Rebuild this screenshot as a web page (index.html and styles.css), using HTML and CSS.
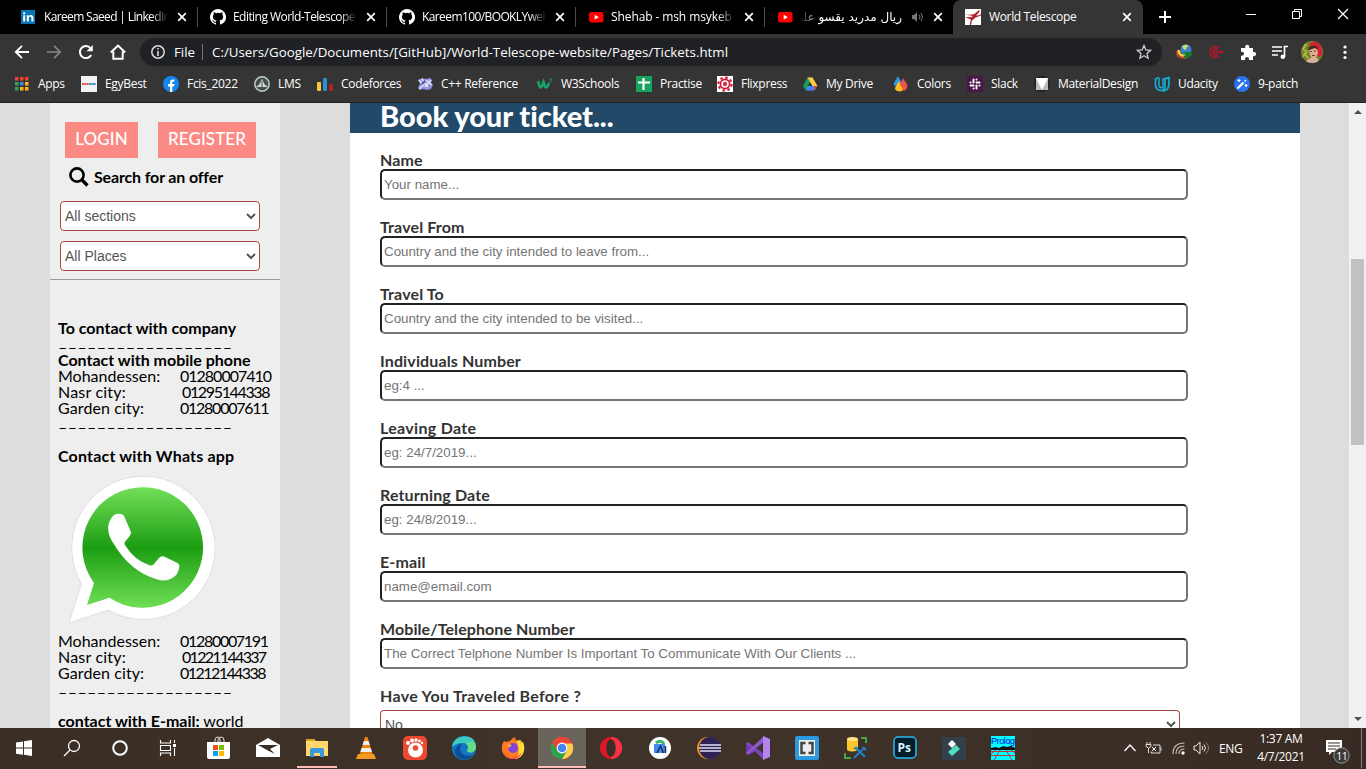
FILE: index.html
```html
<!DOCTYPE html>
<html lang="en">
<head>
<meta charset="utf-8">
<title>World Telescope</title>
<link rel="stylesheet" href="styles.css">
</head>
<body>
<svg class="defs" width="0" height="0">
  <symbol id="x" viewBox="0 0 10 10"><path d="M1.2 1.2l7.6 7.6M8.8 1.2L1.2 8.8" stroke="#fff" stroke-width="1.7"/></symbol>
  <symbol id="github" viewBox="0 0 16 16"><path fill="#fff" d="M8 0a8 8 0 0 0-2.53 15.59c.4.07.55-.17.55-.38v-1.49c-2.23.48-2.69-.94-2.69-.94-.36-.92-.89-1.17-.89-1.17-.73-.5.05-.49.05-.49.8.06 1.23.83 1.23.83.72 1.22 1.88.87 2.34.66.07-.52.28-.87.51-1.07-1.78-.2-3.64-.89-3.64-3.95 0-.87.31-1.59.82-2.15-.08-.2-.36-1.02.08-2.12 0 0 .67-.21 2.2.82a7.6 7.6 0 0 1 4 0c1.53-1.04 2.2-.82 2.2-.82.44 1.1.16 1.92.08 2.12.51.56.82 1.27.82 2.15 0 3.07-1.87 3.75-3.65 3.95.29.25.54.73.54 1.48v2.2c0 .21.15.46.55.38A8 8 0 0 0 8 0z"/></symbol>
  <symbol id="youtube" viewBox="0 0 16 16"><rect x="1" y="3" width="14.5" height="10.5" rx="2.5" fill="#f00"/><path d="M6.7 5.8l4.2 2.4-4.2 2.4z" fill="#fff"/></symbol>
</svg>

<header class="browser">
  <div class="tabs">
    <div class="tab">
      <svg class="fav" viewBox="0 0 16 16"><rect x="0" y="1" width="14" height="14" fill="#0a75b5"/><path d="M2.2 6.2h2v6.3h-2zM2.2 3.2h2v2h-2zM5.8 6.2h2v1c1.3-1.9 4.6-1.4 4.6 1.4v3.9h-2V9c0-1.800-2.600-1.600-2.600 0v3.500h-2z" fill="#fff"/></svg>
      <span class="tab-title fade t-linkedin">Kareem Saeed | LinkedIn</span><svg class="close"><use href="#x"/></svg>
    </div>
    <div class="tab"><svg class="fav"><use href="#github"/></svg><span class="tab-title fade t-edit">Editing World-Telescope</span><svg class="close"><use href="#x"/></svg></div>
    <div class="tab"><svg class="fav"><use href="#github"/></svg><span class="tab-title fade t-book">Kareem100/BOOKLYwel</span><svg class="close"><use href="#x"/></svg></div>
    <div class="tab"><svg class="fav"><use href="#youtube"/></svg><span class="tab-title fade t-shehab">Shehab - msh msykeb |</span><svg class="close"><use href="#x"/></svg></div>
    <div class="tab plain"><svg class="fav"><use href="#youtube"/></svg><span class="tab-title arabic" dir="rtl">ريال مدريد يقسو على</span>
      <svg class="sound" viewBox="0 0 12 12"><path d="M1 4h2l3-3v10L3 8H1z" fill="#777"/><path d="M8 3.500q2 2.500 0 5M10 2q3 4 0 8" fill="none" stroke="#777"/></svg>
      <svg class="close"><use href="#x"/></svg></div>
    <div class="tab active">
      <svg class="fav" viewBox="0 0 16 16"><rect width="16" height="16" fill="#fff"/><path d="M0 5.500l5 .3 4-.5L13.500 1.500 15 1l-1.500 3L11 6.500l3-.3 2-1v1.300l-5.500 2L7 11.500 6 16H4.800l1-5.500L1 8.500 0 8l6 .2L8 7z" fill="#ae1c2c"/></svg>
      <span class="tab-title t-world">World Telescope</span><svg class="close"><use href="#x"/></svg>
    </div>
    <svg class="newtab" viewBox="0 0 14 14"><path d="M7 1v12M1 7h12" stroke="#fff" stroke-width="2"/></svg>
    <div class="winbtns">
      <svg viewBox="0 0 12 12"><path d="M1 6.500h10" stroke="#fff"/></svg>
      <svg viewBox="0 0 12 12"><path d="M1.500 3.500h7v7h-7zM3.500 3.500v-2h7v7h-2" fill="none" stroke="#fff"/></svg>
      <svg viewBox="0 0 12 12"><path d="M1 1l10 10M11 1L1 11" stroke="#fff" stroke-width="1.200"/></svg>
    </div>
  </div>

  <div class="toolbar">
    <nav class="navbtns">
      <svg viewBox="0 0 16 16"><path d="M15 8H2M8 1.800L1.800 8 8 14.200" fill="none" stroke="#fff" stroke-width="1.900"/></svg>
      <svg viewBox="0 0 16 16"><path d="M1 8h13M8 1.800L14.200 8 8 14.200" fill="none" stroke="#858585" stroke-width="1.700"/></svg>
      <svg viewBox="0 0 16 16"><path d="M13.200 11A6 6 0 1 1 12.500 4.200" fill="none" stroke="#fff" stroke-width="2"/><path d="M14.800 1v6.300H8.500z" fill="#fff"/></svg>
      <svg viewBox="0 0 16 16"><path d="M.8 8.500L8 1.600l7.200 6.900M3.300 7.500v7.300h9.400V7.500" fill="none" stroke="#fff" stroke-width="2"/></svg>
    </nav>
    <div class="omnibox">
      <svg class="info" viewBox="0 0 14 14"><circle cx="7" cy="7" r="6.200" fill="none" stroke="#ddd" stroke-width="1.500"/><path d="M7 3v1.600M7 6v5" stroke="#ddd" stroke-width="1.600"/></svg>
      <span class="scheme">File</span><span class="url">C:/Users/Google/Documents/[GitHub]/World-Telescope-website/Pages/Tickets.html</span>
      <svg class="star" viewBox="0 0 16 16"><path d="M8 1.500l1.900 4.400 4.700.4-3.600 3.200 1.100 4.700L8 11.700l-4.100 2.500L5 9.500 1.400 6.300l4.700-.4z" fill="none" stroke="#ccc" stroke-width="1.300"/></svg>
    </div>
    <div class="exts">
      <svg viewBox="0 0 20 20"><circle cx="12" cy="8" r="5.500" fill="#3f7fc9"/><path d="M8 4q4-3 7 0-3 1-3 4-3 0-4-4z" fill="#b7dd75"/><path d="M4 8q-4 8 8 8" fill="none" stroke="#e6452f" stroke-width="1.500"/><path d="M5 8q-1 6 7 6" fill="none" stroke="#f4d43b" stroke-width="2.500"/><path d="M9 10h8l2 2-6 5-4-3 3-1z" fill="#137a27"/></svg>
      <svg viewBox="0 0 20 20"><path d="M13 5.500A5.600 5.600 0 1 0 13 14.500M12 8A3 3 0 1 0 12 12M8 10h7" fill="none" stroke="#cd1127" stroke-width="1.400"/><circle cx="16" cy="10" r="1.200" fill="none" stroke="#cd1127"/></svg>
      <svg viewBox="0 0 20 20"><path d="M3 6h4.200V4.800a2 2 0 0 1 4 0V6H15v4h1a2 2 0 0 1 0 4.200h-1V18h-4v-1a2 2 0 0 0-4 0v1H3v-4.200h1a2 2 0 0 0 0-4H3z" fill="#fff"/></svg>
      <svg viewBox="0 0 20 20"><path d="M2 5h10M2 9h10M2 13h6M14.500 15V4.500H18" fill="none" stroke="#fff" stroke-width="1.700"/><circle cx="12.800" cy="14.800" r="2.300" fill="#fff"/></svg>
      <svg class="avatar" viewBox="0 0 22 22"><clipPath id="av"><circle cx="11" cy="11" r="11"/></clipPath><g clip-path="url(#av)"><path fill="#71852e" d="M0 0h22v22H0z"/><path d="M2 2l3 2-3 4 4 3-5 5M3 12l4 5" fill="none" stroke="#b4bf4b" stroke-width="1.500"/><path d="M8 3q6-6 12 2 3 7-1 11l-3-1z" fill="#d42137"/><path d="M5 22q0-4 5-5h6l4 6z" fill="#d9b0a0"/><path d="M8 7l8-1 1 6q-2 7-5 6-4-2-4-11z" fill="#e0aa8d"/><path d="M7 8q1-4 9-3l1 4-3-2-6 2z" fill="#4a2620"/><path d="M9 10.500h2M13 10h2M11 14.500h3" stroke="#69443a"/></g></svg>
      <svg viewBox="0 0 20 20"><g fill="#fff"><circle cx="11" cy="5" r="1.600"/><circle cx="11" cy="10.300" r="1.600"/><circle cx="11" cy="15.500" r="1.600"/></g></svg>
    </div>
  </div>

  <nav class="bookmarks">
    <a><svg viewBox="0 0 16 16"><path d="M2 1h3.500v3.500H2zM7 1h3.500v3.500H7zM12 1h3.500v3.500H12z" fill="#f04133"/><path d="M2 6h3.500v3.500H2zM2 11h3.500v3.500H2z" fill="#2fa653"/><path d="M7 6h3.500v3.500H7z" fill="#4285f4"/><path d="M7 11h3.500v3.500H7zM12 6h3.500v3.500H12zM12 11h3.500v3.500H12z" fill="#fdb813"/></svg>Apps</a>
    <a><svg viewBox="0 0 16 16"><path fill="#f0f2f5" d="M0 0h16v16H0z"/><path d="M1 8h7" stroke="#df5b49" stroke-width="2.200" stroke-dasharray="2 .3"/><path d="M8 8h7" stroke="#3f8fcf" stroke-width="2.200" stroke-dasharray="2 .3"/></svg>EgyBest</a>
    <a><svg viewBox="0 0 16 16"><circle cx="8" cy="8" r="8" fill="#1685ef"/><path d="M7 16v-5.500H5V8h2V6.400Q7 3.500 10 3.500h1.500v2H10.300Q9.300 5.500 9.300 6.600V8h2.200l-.4 2.500H9.300V16z" fill="#fff"/></svg>Fcis_2022</a>
    <a><svg viewBox="0 0 16 16"><circle cx="8" cy="8" r="7.200" fill="#44504d" stroke="#c6cecb" stroke-width="1.500"/><path d="M8 3l3 6 2 1v1H3v-1l2-1z" fill="#d4d9d4"/><path d="M8 5v7" stroke="#47524e"/></svg>LMS</a>
    <a><svg viewBox="0 0 16 16"><rect y="6" width="4" height="9" rx="1" fill="#f7c641"/><rect x="6" y="2" width="4" height="13" rx="1" fill="#2a92cf"/><rect x="12" y="8" width="4" height="7" rx="1" fill="#b41e25"/></svg>Codeforces</a>
    <a><svg viewBox="0 0 16 16"><path d="M1 4l4-2 4 1 4-1 2 2-1 3 2 2-2 4-4 1-4-1-3 1-2-3 2-3z" fill="#8f91d9"/><path d="M2 4l5 5-5 4M5 3l6 8M9 4l6 5M8 11l6-7" stroke="#e8e8ff" stroke-width="1.300" fill="none"/><path d="M5 8l3-3" stroke="#50509a" stroke-width="2"/></svg>C++ Reference</a>
    <a><svg viewBox="0 0 16 16"><path d="M1 5l1.500 5.500q1.500 2 2.500-.5L6.500 6 8 10.500q1.500 2 2.500 0L12 7" fill="none" stroke="#16a46b" stroke-width="2.600"/><path d="M12.500 3h2l-1 1.500q2 1.500-1 2" fill="none" stroke="#16a46b" stroke-width=".9"/></svg>W3Schools</a>
    <a><svg viewBox="0 0 16 16"><path fill="#16a35d" d="M0 0h16v16H0z"/><path d="M7.500 2v12M2 6.500h12" stroke="#fff" stroke-width="2.200"/></svg>Practise</a>
    <a><svg viewBox="0 0 16 16"><path fill="#fff" d="M0 0h16v16H0z"/><circle cx="8" cy="8" r="4.600" fill="none" stroke="#ce1531" stroke-width="1.700"/><circle cx="8" cy="8" r="6.600" fill="none" stroke="#ce1531" stroke-width="2" stroke-dasharray="2.600 2.580"/><circle cx="8" cy="8" r="2.200" fill="#df3147"/></svg>Flixpress</a>
    <a><svg viewBox="0 0 16 16"><path d="M5.500 1.500h5L8 6 3.500 14 1 10z" fill="#17a05d"/><path d="M5.500 1.500h5l5 8.500h-5z" fill="#ffce42"/><path d="M5.500 10H15l-2.500 4.500h-9z" fill="#4387f4"/><path d="M12 10h3.200l-2.500 4.500z" fill="#df4537"/></svg>My Drive</a>
    <a><svg viewBox="0 0 16 16"><path d="M5 0c1 3 5 6 3 9s-8 2-7-2z" fill="#2d97e3"/><path d="M6 5c1 3 4 5 3 8s-7 3-7-1z" fill="#ffbf22"/><path d="M10 2c1 3 6 6 4 10s-6 3-7 0 2-7 3-10z" fill="#ef5546"/><path d="M5 14q-1-4 2-5l3 4q-1 3-4 2.500z" fill="#ffbf22"/></svg>Colors</a>
    <a><svg viewBox="0 0 16 16"><path fill="#4a154b" d="M0 0h16v16H0z"/><path d="M6.500 3.500v3M9.500 9.500v3M3.500 9.500h3M9.500 6.500h3M9.500 3.500v.1M6.500 12.400v.1M3.500 6.500h.1M12.500 9.500h.1" stroke="#fff" stroke-width="2" stroke-linecap="round"/></svg>Slack</a>
    <a><svg viewBox="0 0 16 16"><circle cx="8" cy="8" r="8" fill="#222"/><path fill="#bbb" d="M2 2h12v12H2z"/><path d="M2 2h12L8 14z" fill="#fff"/></svg>MaterialDesign</a>
    <a><svg viewBox="0 0 16 16"><path d="M5 1.500L1.500 3v7q1 4 5 4.500 4.500 0 4.500-5V3L15 1.500V9q-1 6-7 6" fill="none" stroke="#13acd4" stroke-width="1.700"/><path d="M5 1.500V10q2 3 4 1V3l3-1" fill="none" stroke="#13acd4" stroke-width="1.500"/></svg>Udacity</a>
    <a><svg viewBox="0 0 16 16"><circle cx="8" cy="8" r="8" fill="#2874ee"/><path d="M3.500 12.500l6-6" stroke="#fff" stroke-width="2.200"/><path d="M10.500 5.500l1.500-1.500M5 3v3M3.500 4.500h3M12 8v3M10.500 9.500h3" stroke="#fff" stroke-width="1.200"/></svg>9-patch</a>
  </nav>
</header>

<div class="page">
  <aside class="sidebar">
    <div class="auth"><a class="btn login">LOGIN</a><a class="btn register">REGISTER</a></div>
    <div class="search"><svg viewBox="0 0 20 20"><circle cx="8" cy="8" r="6.600" fill="none" stroke="#000" stroke-width="2.600"/><path d="M12.500 12.500l6 6" stroke="#000" stroke-width="3.200"/></svg><b>Search for an offer</b></div>
    <select class="pick"><option>All sections</option></select>
    <select class="pick"><option>All Places</option></select>
    <hr class="rule">
    <div class="contact">
      <b class="h-company">To contact with company</b>
      <span class="dashes">__________________</span>
      <b class="h-mobile">Contact with mobile phone</b>
      <div class="row"><span class="moh">Mohandessen:</span><span class="num n1">01280007410</span></div>
      <div class="row"><span class="nasr">Nasr city:</span><span class="num in n2">01295144338</span></div>
      <div class="row"><span class="gard">Garden city:</span><span class="num n3">01280007611</span></div>
      <span class="dashes">__________________</span>
      <b class="h-whats">Contact with Whats app</b>
      <svg class="whatsapp" viewBox="0 0 147 150">
        <defs><linearGradient id="wg" x1="0" y1="0" x2="0" y2="1"><stop offset="0" stop-color="#73df59"/><stop offset=".5" stop-color="#1c9e12"/><stop offset="1" stop-color="#70de55"/></linearGradient></defs>
        <path d="M.8 149L13.500 110A71.700 71.700 0 1 1 40 136.200z" fill="#fff" stroke="#dfdfdf"/>
        <path d="M19 131L26 109A60.300 60.300 0 1 1 41.500 123.800z" fill="url(#wg)"/>
        <path d="M46 41q4-2 8.500-.5 1.500 1 2 2.500l6 14c1 2 0 4-1.500 6l-3.500 4q-2 2-.5 4 9 15 24 20 3 1.500 5-1l5-6q2-2.500 5-1.500l13.500 6.500q2 1 1.800 3-.3 7-4.800 10.500c-5 4-11 5-17 3-20-6-33-18-44-36-9-14-5-23 .5-28.500z" fill="#fff"/>
      </svg>
      <div class="row"><span class="moh">Mohandessen:</span><span class="num n4">01280007191</span></div>
      <div class="row"><span class="nasr">Nasr city:</span><span class="num in n5">01221144337</span></div>
      <div class="row"><span class="gard">Garden city:</span><span class="num n6">01212144338</span></div>
      <span class="dashes">__________________</span>
      <p class="mail"><b>contact with E-mail:</b> world</p>
    </div>
  </aside>

  <main class="booking">
    <h1>Book your ticket...</h1>
    <form>
      <label><span>Name</span><input placeholder="Your name..."></label>
      <label><span>Travel From</span><input placeholder="Country and the city intended to leave from..."></label>
      <label><span>Travel To</span><input placeholder="Country and the city intended to be visited..."></label>
      <label><span>Individuals Number</span><input placeholder="eg:4 ..."></label>
      <label><span class="loose">Leaving Date</span><input placeholder="eg: 24/7/2019..."></label>
      <label><span>Returning Date</span><input placeholder="eg: 24/8/2019..."></label>
      <label><span>E-mail</span><input placeholder="name@email.com"></label>
      <label><span class="tight">Mobile/Telephone Number</span><input placeholder="The Correct Telphone Number Is Important To Communicate With Our Clients ..."></label>
      <label><span class="loose">Have You Traveled Before ?</span><select class="pick wide"><option>No</option></select></label>
    </form>
  </main>

  <div class="scrollbar"><i class="up"></i><i class="thumb"></i><i class="down"></i></div>
</div>

<footer class="taskbar">
  <div class="sys">
    <svg viewBox="0 0 24 24"><path d="M4 6.500l7-1v6H4zM12 5.300L20 4v7.500h-8zM4 12.500h7v6.200l-7-1zM12 12.500h8V20l-8-1.200z" fill="#fff"/></svg>
    <svg viewBox="0 0 24 24"><circle cx="14" cy="10" r="5.500" fill="none" stroke="#fff" stroke-width="1.300"/><path d="M10 14l-6 6" stroke="#fff" stroke-width="1.300"/></svg>
    <svg viewBox="0 0 24 24"><circle cx="12" cy="12" r="6.800" fill="none" stroke="#fff" stroke-width="2"/></svg>
    <svg viewBox="0 0 24 24"><path d="M4.500 4v3h10V4M4.500 20v-3h10v3M4.500 9.500h10v5h-10zM18.500 4v3M18.500 12v8" fill="none" stroke="#fff" stroke-width="1.100"/><path d="M17 8h3v3h-3z" fill="#fff"/></svg>
  </div>
  <div class="apps">
    <span><svg viewBox="0 0 24 24"><path d="M8 7V4q0-3 3-3 2 0 2 3v3M11 7V4q1-3 3-3 3 0 3 3v3" fill="none" stroke="#ddd"/><path fill="#fff" d="M0 6h23v15q0 2-2 2H2q-2 0-2-2z"/><path d="M6 9h5v5H6z" fill="#f25022"/><path d="M12 9h5v5h-5z" fill="#7fba00"/><path d="M6 15h5v5H6z" fill="#00a4ef"/><path d="M12 15h5v5h-5z" fill="#ffb900"/></svg></span>
    <span><svg viewBox="0 0 24 24"><path d="M0 9l12-7 12 7v12H0z" fill="#fff"/><path d="M2 9l20 0-8 4 5 5-8-4z" fill="#3a2e26"/></svg></span>
    <span class="open"><svg viewBox="0 0 24 24"><path d="M1 3h8l2 2h12v15H1z" fill="#ffd76d"/><path d="M1 3h8l1 2H1z" fill="#dfa01e"/><path d="M5 20v-6q0-2 2-2h10q2 0 2 2v7h-4v-4H9v4H5z" fill="#3b97dd"/></svg></span>
    <span><svg viewBox="0 0 24 24"><path d="M11 1h2.500l6 20H5z" fill="#ef810d"/><path d="M9.800 5h4.800l1.200 4H8.600zM7.500 12h9.200l1.200 4H6.300z" fill="#eee"/><path d="M4 18h16l2 5H2z" fill="#f49b24"/></svg></span>
    <span><svg viewBox="0 0 24 24"><rect width="24" height="24" rx="5" fill="#ee4831"/><circle cx="12.500" cy="14" r="7.500" fill="#fff"/><circle cx="12.500" cy="12" r="2.800" fill="#ee4831"/><g fill="#fff"><circle cx="5" cy="7" r="2"/><circle cx="9" cy="4.500" r="2"/><circle cx="13" cy="4" r="1.700"/><circle cx="16.500" cy="5" r="1.400"/><circle cx="19" cy="7" r="1.200"/></g></svg></span>
    <span><svg viewBox="0 0 24 24"><circle cx="12" cy="12" r="12" fill="#1475c4"/><path d="M0 11C1-2 23-4 24 10c0 6-7 7-9 4 3-4-1-7-4-7-5 0-9 2-11 4z" fill="#3ccbc1"/><path d="M10 8c-5 7 1 14 11 11-7 8-17 4-18-3 0-4 3-8 7-8z" fill="#0d4f94"/><path d="M24 11c0 6-7 7-9 4 2-3 1-6-1-7 4-5 10-1 10 3z" fill="#65de83"/></svg></span>
    <span><svg viewBox="0 0 24 24"><path d="M3 5l2 1 4-1 4-4 2 4 5-1c7 13 0 19-8 19C2 23-2 13 3 5z" fill="#ff7a23"/><path d="M13 0l3 5 3-1 1 3 2-1c4 10-2 16-8 17 6-5 4-14-1-23z" fill="#ffdc37"/><path d="M2 12c1 13 14 12 19 4-3 10-19 10-19-4z" fill="#ff3659"/><circle cx="12" cy="12" r="5" fill="#8542d8"/><path d="M6 8l5 1-3 3z" fill="#ffb02b"/></svg></span>
    <span class="open current"><svg viewBox="0 0 24 24"><circle cx="12" cy="12" r="11.200" fill="#e94535"/><path d="M2 6.500A11.200 11.200 0 0 0 12 23.200L17 15l-5 2-5-3z" fill="#2ba24c"/><path d="M22.200 7.500H12l5 7-5 8.700A11.200 11.200 0 0 0 22.200 7.500z" fill="#fdcf48"/><circle cx="12" cy="12" r="5.400" fill="#fff"/><circle cx="12" cy="12" r="4.300" fill="#4285f4"/></svg></span>
    <span><svg viewBox="0 0 24 24"><circle cx="12" cy="12" r="11" fill="#dd1728"/><path d="M12 1a11 11 0 0 1 0 22z" fill="#fa3342"/><ellipse cx="12" cy="12" rx="4.700" ry="8.700" fill="#3a2e26"/></svg></span>
    <span><svg viewBox="0 0 24 24"><circle cx="12" cy="12" r="11" fill="#fff"/><path d="M6 8h11v9H6z" fill="#4387f4"/><path d="M8 7q5-4 8 1" stroke="#35b66b" stroke-width="3" fill="none"/><path d="M9 17l3.500-7 3 7M17.500 10v7" stroke="#183554" stroke-width="1.500" fill="none"/></svg></span>
    <span><svg viewBox="0 0 24 24"><circle cx="11" cy="12" r="11" fill="#f39425"/><circle cx="13" cy="12" r="11" fill="#2c2254"/><path d="M3 9h21M2 12h22M3 15h21" stroke="#e4e0f1" stroke-width="1.700"/></svg></span>
    <span><svg viewBox="0 0 24 24"><path d="M0 7l2-1L18 18v6L9 15.500 2 19l-2-1z" fill="#7a45bb"/><path d="M0 17l2 1L18 6V0L7.500 10z" fill="#8f57d0"/><path d="M0 7v10l4-5z" fill="#6b3aa8"/><path d="M17 0l7 3v18l-7 3z" fill="#b583ee"/></svg></span>
    <span><svg viewBox="0 0 24 24"><rect width="24" height="24" rx="2" fill="#2a9be0"/><path fill="#eee" d="M4 4h16v16H4z"/><path d="M10.500 7h-4v10h4M13.500 7h4v10h-4" fill="none" stroke="#444" stroke-width="2.500"/></svg></span>
    <span><svg viewBox="0 0 24 24"><path d="M3 3h11v11q-6 3-11 0z" fill="#ffc72e"/><ellipse cx="8.500" cy="3" rx="5.500" ry="2" fill="#ffe586"/><path d="M17 2h5v5M1 17v5h6" fill="none" stroke="#45a445" stroke-width="2"/><path d="M10 22L20 12M12 12l9 9M10 13l3-2M19 11l3 3" stroke="#1d80ce" stroke-width="2"/></svg></span>
    <span><svg viewBox="0 0 24 24"><rect x="1" y="1" width="22" height="21" rx="4" fill="#021e2b" stroke="#2bb9f2" stroke-width="1.500"/><text class="ps" x="4.500" y="16">Ps</text></svg></span>
    <span><svg viewBox="0 0 24 24"><path fill="#32404c" d="M0 1h24v23H0z"/><path d="M6 16l8-7 4 4-8 7z" fill="#4fe0c1"/><path d="M6 8l4-4 4 4-4 4z" fill="#fff"/></svg></span>
    <span><svg viewBox="0 0 24 24"><path fill="#0ff" d="M0 0h24v24H0z"/><text class="prolog" x="0" y="8" textLength="24">Prolog</text><path d="M0 12l5-1 3 1 4-2 4 1 4-1 4 2v2H0z" fill="#111"/><path d="M0 15.500h24M0 19.500h24M9 14L3 24M15 14l6 10M5 14l-5 4M20 14l4 3" stroke="#d11" stroke-width=".8" fill="none"/></svg></span>
  </div>
  <div class="tray">
    <svg class="chev" viewBox="0 0 14 10"><path d="M1.500 8L7 2l5.500 6" fill="none" stroke="#fff" stroke-width="1.300"/></svg>
    <svg class="batt" viewBox="0 0 17 14"><path d="M2 1v2M5 1v2M1 3.500h5v2q-2.500 3-5 0zM3.500 7v5M6 10.500V12h9V4H8M16 6.500v3" fill="none" stroke="#ddd"/><path d="M7 6l4 4M11 6l-4 4" stroke="#fff"/></svg>
    <svg class="wifi" viewBox="0 0 14 14"><path d="M1 13Q1 2 12.500 2M4 13Q4 5 12.500 5M7 13Q7 8 12.500 8" fill="none" stroke="#c8c2be" stroke-width="1.200"/><circle cx="11" cy="12" r="1.700" fill="#fff"/></svg>
    <svg class="vol" viewBox="0 0 17 14"><path d="M1 5h2l4-4v12L3 9H1zM9 5q1.500 2 0 4M11 3.500q3 3.500 0 7" fill="none" stroke="#eee"/><path d="M13 1.500q5 5.500 0 11" fill="none" stroke="#887f78"/></svg>
    <span class="lang">ENG</span>
    <div class="clock"><span>1:37 AM</span><span>4/7/2021</span></div>
    <svg class="note" viewBox="0 0 25 25"><path d="M1 1h16v12H7l-3 3v-3H1z" fill="#fff"/><path d="M3 4h12M3 7h12M3 10h8" stroke="#3a2e26"/><circle cx="16.500" cy="16.500" r="7.700" fill="#3a3a3a" stroke="#999"/><text class="badge" x="11.300" y="20.500">11</text></svg>
    <i class="peek"></i>
  </div>
</footer>
</body>
</html>
```
FILE: styles.css
```css
* { box-sizing: border-box; }
body { margin: 0; width: 1366px; height: 769px; overflow: hidden; display: flex; flex-direction: column; font-family: "Open Sans", "Noto Sans", sans-serif; }
svg { display: block; flex: none; }
.defs { position: absolute; }

/* browser chrome */
.browser { height: 103px; flex: none; background: #353535; color: #fff; border-bottom: 1px solid #222; }
.tabs { height: 34px; background: #000; display: flex; align-items: center; padding-left: 9px; }
.tab { width: 189px; height: 34px; display: flex; align-items: center; padding: 0 11px 0 12px; position: relative; }
.tab::after { content: ""; position: absolute; right: 0; top: 7px; width: 1px; height: 20px; background: #4c4c4c; }
.tab.plain::after, .tab.active::after { display: none; }
.tab.active { background: #353535; border-radius: 8px 8px 0 0; width: 190px; margin-left: -1px; }
.fav { width: 16px; height: 16px; margin-right: 7px; }
.tab.active .fav { margin-right: 8px; }
.tab-title { flex: 1; white-space: nowrap; overflow: hidden; font-size: 12px; line-height: 20px; letter-spacing: -.3px; margin-right: 6px; }
.fade { -webkit-mask-image: linear-gradient(90deg, #000 84%, transparent 98%); mask-image: linear-gradient(90deg, #000 84%, transparent 98%); }
.t-linkedin { letter-spacing: -.65px; }
.t-edit { letter-spacing: -.55px; }
.t-book { letter-spacing: -.6px; }
.t-shehab { letter-spacing: -.1px; }
.t-world { letter-spacing: -.35px; }
.arabic { font-family: "DejaVu Sans", sans-serif; letter-spacing: 0; font-size: 12px; margin-right: 9px; -webkit-mask-image: linear-gradient(270deg, #000 82%, transparent); mask-image: linear-gradient(270deg, #000 82%, transparent); }
.sound { width: 12px; height: 12px; margin-right: 10px; }
.close { width: 10px; height: 10px; }
.newtab { width: 14px; height: 14px; margin-left: 15px; }
.winbtns { display: flex; gap: 34px; margin-left: auto; padding-right: 17px; margin-top: -6px; }
.winbtns svg { width: 12px; height: 12px; }

.toolbar { height: 36px; display: flex; align-items: center; }
.navbtns { display: flex; gap: 16px; padding-left: 14px; width: 140px; }
.navbtns svg { width: 16px; height: 16px; }
.omnibox { width: 1022px; height: 28px; border-radius: 14px; background: #202124; display: flex; align-items: center; padding: 0 10px 0 11px; font-size: 13.3px; line-height: 20px; white-space: nowrap; }
.info { width: 14px; height: 14px; margin-right: 9px; }
.scheme { width: 29px; height: 16px; line-height: 16px; border-right: 1px solid #70757a; margin-right: 9px; }
.url { letter-spacing: .01px; }
.star { width: 16px; height: 16px; margin-left: auto; }
.exts { display: flex; align-items: center; gap: 12px; padding-left: 12px; }
.exts svg { width: 20px; height: 20px; }
.exts .avatar { width: 22px; height: 22px; margin: 0 -1px; }

.bookmarks { height: 28px; display: grid; align-items: center; padding-left: 13px; grid-template-columns: 68px 82px 91px 63px 100px 120px 99px 81px 85px 91px 74px 67px 120px 80px 80px; }
.bookmarks a { display: flex; align-items: center; gap: 8px; font-size: 12px; letter-spacing: -.3px; line-height: 20px; white-space: nowrap; }
.bookmarks a:first-child { gap: 9px; }
.bookmarks svg { width: 16px; height: 16px; }

/* web page */
.page { height: 625px; flex: none; overflow: hidden; background: #ddd; display: flex; font-family: Lato, sans-serif; }
.sidebar { width: 230px; margin-left: 50px; background: #eee; color: #000; font-size: 16px; }
.auth { display: flex; gap: 20px; padding: 19px 0 0 15px; }
.btn { height: 36px; background: #fb8a84; color: #fff; font-size: 17px; font-weight: 500; line-height: 34px; text-align: center; letter-spacing: .1px; }
.login { width: 73px; }
.register { width: 98px; }
.search { display: flex; align-items: center; gap: 5px; height: 20px; margin: 8px 0 15px 19px; letter-spacing: -.15px; }
.search svg { width: 20px; height: 20px; margin-top: 2px; }
.pick { display: block; width: 200px; height: 30px; margin: 0 0 10px 10px; padding: 0; border: 1px solid #a94442; border-radius: 4px; background: #fff; color: #555; font: 14px "Liberation Sans", Arial, sans-serif; }
.rule { margin: -2px 0 0; border: 0; border-top: 1px solid #9a9a9a; }
.contact { padding: 40px 0 0 8px; line-height: 16px; display: flex; flex-direction: column; white-space: nowrap; }
.dashes { letter-spacing: 2.35px; height: 16px; padding-left: 1px; line-height: 10px; }
.row { display: grid; grid-template-columns: 122px auto; }
.num { letter-spacing: -1px; }
.num.in { padding-left: 2px; }
.n2 { letter-spacing: -1.35px; }
.n3 { letter-spacing: -1.25px; }
.n4 { letter-spacing: -1.3px; }
.n5 { letter-spacing: -1.7px; }
.n6 { letter-spacing: -1.55px; }
.nasr { letter-spacing: .2px; }
.gard { letter-spacing: .1px; }
.h-whats { margin-top: 16px; letter-spacing: .18px; }
.whatsapp { width: 147px; height: 150px; margin: 10px 0 9px 10px; }
.mail { margin: 16px 0 0; }

.booking { width: 950px; margin-left: 70px; background: #fff; }
.booking h1 { margin: 0; height: 30px; background: #224968; color: #fff; font-size: 29px; line-height: 25px; font-weight: 900; letter-spacing: -.05px; padding-left: 30px; }
form { padding: 19px 0 0 30px; }
label { display: block; height: 67px; line-height: 16px; font-size: 16px; font-weight: 700; color: #333; white-space: nowrap; letter-spacing: .13px; }
label span { display: block; height: 17px; }
.loose { letter-spacing: .3px; }
.tight { letter-spacing: .08px; }
input { display: block; width: 808px; height: 31px; padding: 1px 2px; border: 2px solid #767676; border-top-color: #212121; border-left-color: #212121; border-radius: 5px; background: #fff; font: 13.333px "Liberation Sans", Arial, sans-serif; }
input::placeholder { color: #757575; }
.pick.wide { width: 800px; height: 28px; border-bottom: 0; margin: 5px 0 0; }

.scrollbar { width: 17px; margin-left: 49px; background: #f1f1f1; display: flex; flex-direction: column; align-items: center; }
.up { border: 4px solid transparent; border-top: 0; border-bottom: 4px solid #505050; margin-top: 7px; }
.thumb { width: 13px; height: 186px; margin-top: 145px; background: #c1c1c1; }
.down { border: 4px solid transparent; border-bottom: 0; border-top: 4px solid #505050; margin: auto 0 7px; }

/* taskbar */
.taskbar { height: 41px; flex: none; display: flex; background: linear-gradient(90deg, #3a2e25, #40342a 50%, #382b23); color: #fff; }
.sys { display: grid; grid-template-columns: repeat(4, 48px); justify-items: center; height: 40px; align-items: center; }
.sys svg, .apps svg { width: 24px; height: 24px; }
.apps { display: grid; grid-template-columns: repeat(17, 49px); padding-left: 2px; height: 40px; }
.apps span { display: flex; align-items: center; justify-content: center; height: 40px; position: relative; }
.open::after { content: ""; position: absolute; bottom: 0; left: 5px; width: 40px; height: 2px; background: #ffbdb5; }
.apps .current { background: #6b645d; width: 48px; margin-left: 1px; }
.current::after { left: 0; width: 48px; }
.ps { font: 700 12px "Open Sans", sans-serif; fill: #d8f3ff; }
.prolog { font: 9px "Liberation Sans", sans-serif; fill: #0000e0; }
.tray { margin-left: auto; display: flex; align-items: center; height: 40px; font-size: 12px; letter-spacing: -.3px; }
.chev { width: 14px; height: 10px; margin-right: 8px; }
.batt { width: 17px; height: 14px; margin-right: 10px; }
.wifi { width: 14px; height: 14px; margin-right: 7px; }
.vol { width: 17px; height: 14px; margin-right: 9px; }
.lang { width: 24px; }
.clock { width: 76px; display: flex; flex-direction: column; text-align: center; line-height: 18px; }
.note { width: 25px; height: 25px; margin: 6px 11px 0 6px; }
.badge { font: 10.500px "Open Sans", sans-serif; fill: #fff; letter-spacing: -.5px; }
.peek { width: 1px; height: 40px; background: #887f78; margin-right: 4px; }
```
